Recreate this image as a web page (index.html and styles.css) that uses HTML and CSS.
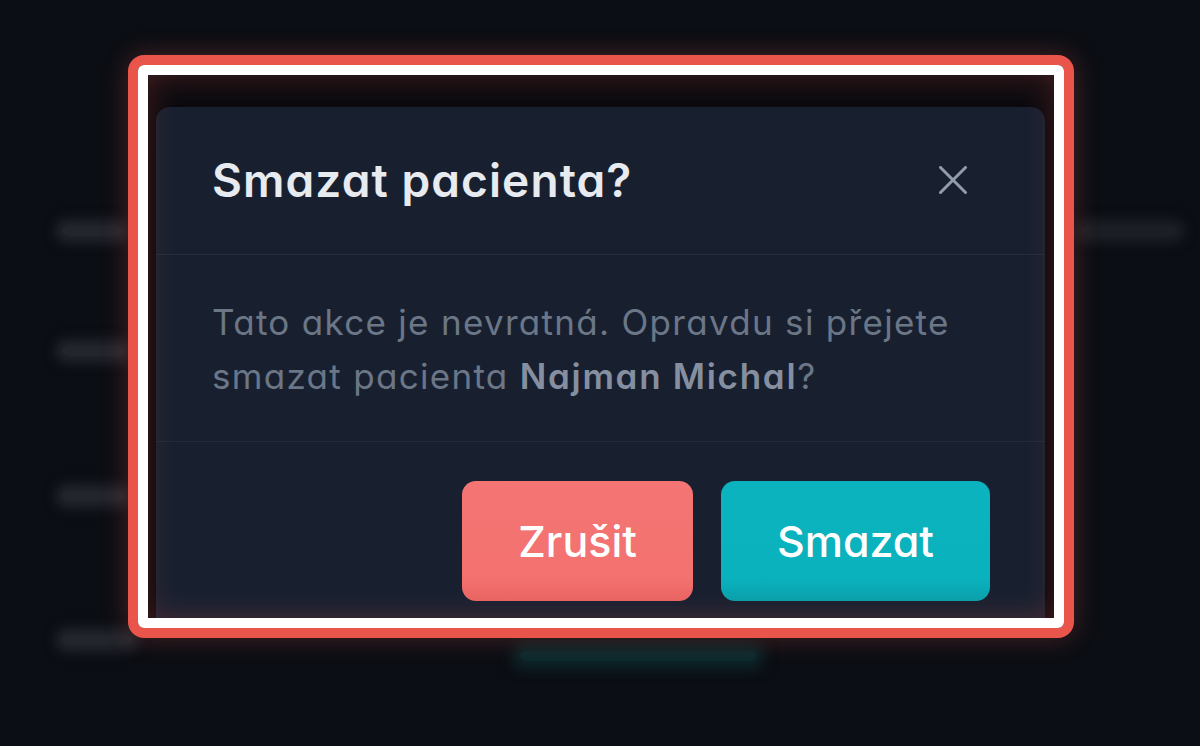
FILE: index.html
```html
<!DOCTYPE html>
<html lang="cs">
<head>
<meta charset="utf-8">
<title>Smazat pacienta</title>
<link rel="stylesheet" href="styles.css">
</head>
<body>
  <div class="page">
    <div class="row row-head">
      <span class="blob blob-a"></span>
      <span class="blob blob-b"></span>
    </div>
    <div class="row row-2"><span class="blob blob-c"></span></div>
    <div class="row row-3"><span class="blob blob-c"></span></div>
    <div class="row row-4">
      <span class="blob blob-d"></span>
      <span class="blob blob-teal"></span>
    </div>
  </div>

  <div class="frame">
    <div class="frame-inner">
      <div class="modal" role="dialog" aria-labelledby="dlg-title">
        <div class="modal-header">
          <h2 id="dlg-title" class="modal-title">Smazat pacienta?</h2>
          <button class="close-btn" aria-label="Zavřít">
            <svg viewBox="0 0 28 28" width="28" height="28" aria-hidden="true">
              <path d="M1.5 1.5 L26.5 26.5 M26.5 1.5 L1.5 26.5" stroke="currentColor" stroke-width="3" stroke-linecap="round" fill="none"/>
            </svg>
          </button>
        </div>
        <div class="modal-body">
          <p class="modal-text">Tato akce je nevratná. Opravdu si přejete smazat pacienta <strong>Najman Michal</strong>?</p>
        </div>
        <div class="modal-footer">
          <button class="btn btn-cancel">Zrušit</button>
          <button class="btn btn-delete">Smazat</button>
        </div>
      </div>
    </div>
  </div>
</body>
</html>
```

FILE: styles.css
```css
* { box-sizing: border-box; }

html, body {
  margin: 0;
  padding: 0;
}

body {
  width: 1200px;
  height: 746px;
  overflow: hidden;
  position: relative;
  background: #0b0e14;
  font-family: Inter, "Noto Sans", "DejaVu Sans", sans-serif;
  font-feature-settings: "cv11" 1;
}

/* blurred background page */
.page {
  padding: 226px 22px 0 62px;
}

.row {
  display: flex;
  align-items: flex-start;
  height: 16px;
}

.row-head { justify-content: space-between; }
.row-2 { margin-top: 104px; }
.row-3 { margin-top: 129px; }
.row-4 { margin-top: 128px; }

.blob {
  display: block;
  height: 10px;
  border-radius: 6px;
  background: rgba(44, 47, 54, 0.7);
  box-shadow: 0 0 12px 7px rgba(44, 47, 54, 0.7);
}

.blob-a { width: 60px; }
.blob-b { width: 96px; background: rgba(38, 41, 48, 0.6); box-shadow: 0 0 12px 7px rgba(38, 41, 48, 0.6); }
.blob-c { width: 62px; }
.blob-d { width: 70px; }
.blob-teal {
  width: 236px;
  margin-left: 388px;
  margin-top: 16px;
  background: rgba(14, 60, 62, 0.6);
  box-shadow: 0 0 14px 8px rgba(14, 60, 62, 0.55);
}

/* highlight frame */
.frame {
  position: absolute;
  left: 128px;
  top: 55px;
  width: 946px;
  height: 583px;
  border: 10px solid #ea554b;
  border-radius: 16px;
  box-shadow: 0 0 26px rgba(234, 85, 75, 0.28);
}

.frame-inner {
  position: relative;
  height: 100%;
  border: 10px solid #ffffff;
  border-radius: 6px;
  background: #0e0c11;
  overflow: hidden;
  padding: 32px 9px 0 8px;
}

.frame-inner::after {
  content: "";
  position: absolute;
  inset: 0;
  box-shadow: inset 0 0 28px 2px rgba(234, 85, 75, 0.22);
  pointer-events: none;
}

/* modal */
.modal {
  background: #182030;
  border-radius: 14px;
  box-shadow: 0 8px 30px rgba(0, 0, 0, 0.5);
}

.modal-header {
  display: flex;
  align-items: center;
  justify-content: space-between;
  padding: 45px 78px 46px 56px;
  border-bottom: 1px solid #242d3c;
}

.modal-title {
  margin: 0;
  font-size: 46px;
  line-height: 56px;
  font-weight: 600;
  color: #e7eaef;
  letter-spacing: 1.1px;
}

.close-btn {
  display: flex;
  padding: 0;
  margin: 0;
  border: 0;
  background: none;
  color: #939cab;
  cursor: pointer;
}

.modal-body {
  padding: 40px 56px 38px;
  border-bottom: 1px solid #222b3a;
}

.modal-text {
  margin: 0;
  font-size: 35px;
  line-height: 54px;
  color: #6b7687;
  letter-spacing: 1.3px;
}

.modal-text strong {
  font-weight: 600;
  color: #858fa0;
  letter-spacing: 1.7px;
}

.modal-footer {
  display: flex;
  justify-content: flex-end;
  gap: 28px;
  padding: 39px 55px 39px;
}

.btn {
  height: 120px;
  padding: 0 56px;
  border: 0;
  border-radius: 14px;
  font-family: inherit;
  font-feature-settings: "cv11" 1;
  font-size: 43px;
  font-weight: 500;
  color: #ffffff;
  cursor: pointer;
}

.btn-cancel {
  min-width: 230px;
  background: linear-gradient(180deg, #f47574 0%, #f37270 80%, #e96563 100%);
}

.btn-delete {
  min-width: 268px;
  background: linear-gradient(180deg, #0ab3be 0%, #0ab2bd 80%, #08a2ad 100%);
}
```
